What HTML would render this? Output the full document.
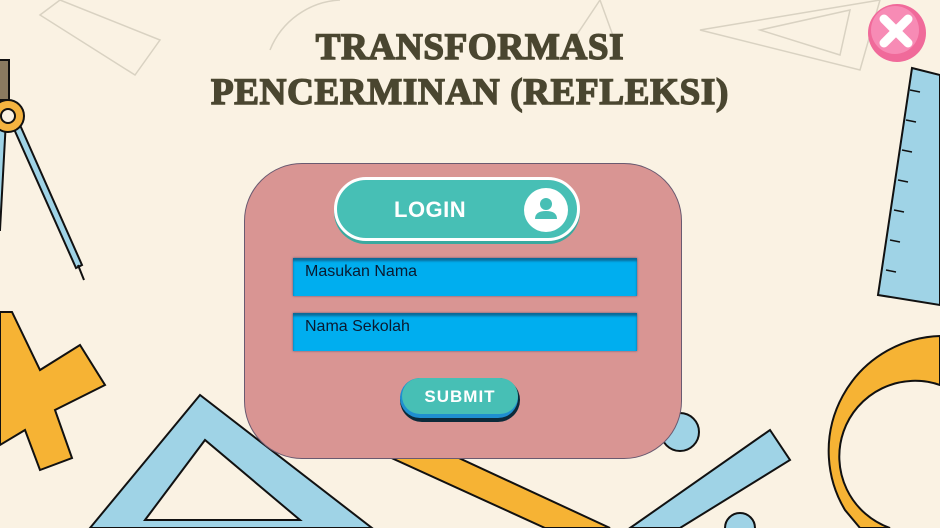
<!DOCTYPE html>
<html><head><meta charset="utf-8"><style>
html,body{margin:0;padding:0}
body{width:940px;height:528px;overflow:hidden;background:#faf2e3;position:relative;font-family:"Liberation Sans",sans-serif}
.title{position:absolute;left:0;width:940px;text-align:center;font-family:"Liberation Serif",serif;font-weight:bold;color:#4a4630;font-size:37px;line-height:45px;top:25px;letter-spacing:0.7px;-webkit-text-stroke:1.5px #4a4630}
.card{position:absolute;left:244px;top:163px;width:438px;height:296px;background:#d99593;border:1px solid #6a5a70;border-radius:58px;box-sizing:border-box}
.login{position:absolute;left:334px;top:177px;width:246px;height:64px;border-radius:32px;background:#47bfb5;border:3px solid #fff;box-sizing:border-box;box-shadow:0 3px 0 #3aa99f}
.login span{position:absolute;left:57px;top:17px;color:#fff;font-weight:bold;font-size:22px;letter-spacing:0.5px}
.av{position:absolute;right:9px;top:8px;width:44px;height:44px;border-radius:50%;background:#fff}
.inp{position:absolute;left:293px;width:344px;height:38px;background:#00aeef;box-shadow:inset 0 3px 2px #0a6a98,0 0 2px #557;}
.inp span{position:absolute;left:12px;top:5px;font-family:"Liberation Sans",sans-serif;font-size:16px;color:#0a1a30}
.sub{position:absolute;left:400px;top:378px;width:120px;height:44px;border-radius:22px;background:#0c2a3a}
.sub .b{position:absolute;left:0;top:0;width:118px;height:40px;border-radius:20px;background:#1f8fd0}
.sub .t{position:absolute;left:2px;top:0;width:116px;height:36px;border-radius:18px;background:#47bfb5;color:#fff;font-weight:bold;font-size:17px;text-align:center;line-height:38px;letter-spacing:1px}
</style></head><body>
<svg width="940" height="528" style="position:absolute;left:0;top:0">
<g stroke="#d9d2c2" fill="none" stroke-width="1.5">
<polygon points="60,0 160,40 135,75 40,15"/>
<polygon points="700,30 880,0 860,70"/>
<polygon points="760,30 850,10 840,55"/>
<path d="M270,50 A80,80 0 0 1 340,0"/>
<path d="M560,60 L600,0 L620,55"/>
</g>
<g stroke="#111" stroke-width="2">
<rect x="-5" y="60" width="14" height="40" fill="#8a7a60"/>
<polygon points="10,120 20,125 82,265 76,268" fill="#9fd3e6"/>
<line x1="78" y1="265" x2="84" y2="280"/>
<polygon points="-2,120 6,120 0,230 -4,230" fill="#9fd3e6"/>
<circle cx="8" cy="116" r="16" fill="#f4b340"/>
<circle cx="8" cy="116" r="7" fill="#faf2e3"/>
</g>
<g stroke="#111" stroke-width="2" fill="#f6b334">
<polygon points="0,312 12,312 40,370 80,345 105,385 55,410 72,458 40,470 25,430 0,445"/>
</g>
<g stroke="#111" stroke-width="2" fill="#9fd3e6">
<path d="M90,528 L200,395 L372,528 Z M145,520 L205,440 L300,520 Z" fill-rule="evenodd"/>
</g>
<polygon points="385,455 420,440 610,528 545,528" fill="#f6b334" stroke="#111" stroke-width="2"/>
<circle cx="680" cy="432" r="19" fill="#9fd3e6" stroke="#111" stroke-width="2"/>
<polygon points="630,528 770,430 790,460 680,528" fill="#9fd3e6" stroke="#111" stroke-width="2"/>
<circle cx="740" cy="528" r="15" fill="#9fd3e6" stroke="#111" stroke-width="2"/>
<polygon points="912,68 940,75 940,305 878,295" fill="#9fd3e6" stroke="#111" stroke-width="2"/>
<g stroke="#111" stroke-width="1.5">
<line x1="910" y1="90" x2="920" y2="92"/><line x1="906" y1="120" x2="916" y2="122"/><line x1="902" y1="150" x2="912" y2="152"/><line x1="898" y1="180" x2="908" y2="182"/><line x1="894" y1="210" x2="904" y2="212"/><line x1="890" y1="240" x2="900" y2="242"/><line x1="886" y1="270" x2="896" y2="272"/>
</g>
<path d="M940,336 A115,115 0 0 0 845,510 L860,528 L890,528 A75,75 0 0 1 940,385 Z" fill="#f6b334" stroke="#111" stroke-width="2"/>
<circle cx="897" cy="33" r="29" fill="#f06a9a"/>
<circle cx="895" cy="30" r="24" fill="#f78bb5"/>
<path d="M884,19 L908,43 M908,19 L884,43" stroke="#fff" stroke-width="9" stroke-linecap="round"/>
</svg>
<div class="title">TRANSFORMASI<br>PENCERMINAN (REFLEKSI)</div>
<div class="card"></div>
<div class="login"><span>LOGIN</span><div class="av"><svg width="44" height="44"><circle cx="22" cy="16" r="6" fill="#47bfb5"/><path d="M11,31 Q11,23 22,23 Q33,23 33,31 Z" fill="#47bfb5"/></svg></div></div>
<div class="inp" style="top:258px"><span>Masukan Nama</span></div>
<div class="inp" style="top:313px"><span>Nama Sekolah</span></div>
<div class="sub"><div class="b"></div><div class="t">SUBMIT</div></div>
</body></html>
